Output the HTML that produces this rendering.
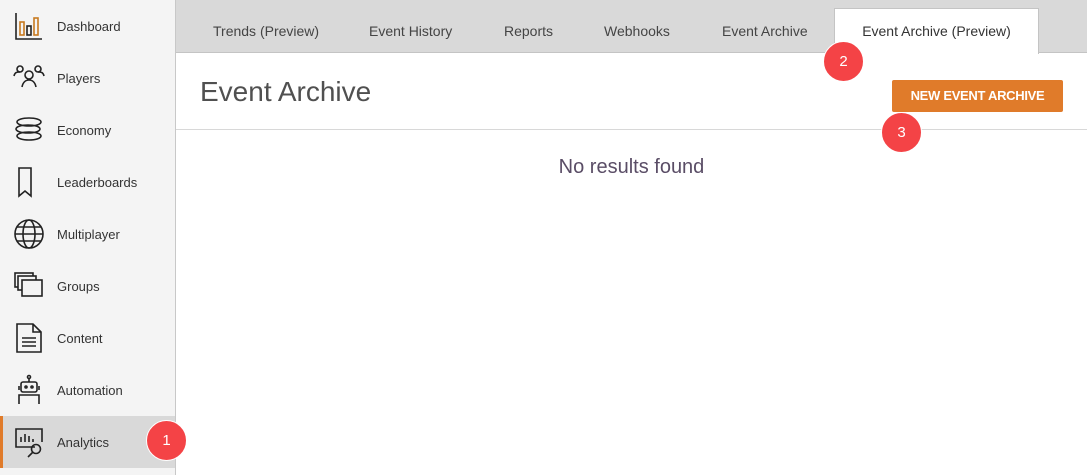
<!DOCTYPE html>
<html><head><style>
*{box-sizing:border-box;margin:0;padding:0}
body{width:1087px;height:475px;overflow:hidden;background:#fff;font-family:"Liberation Sans",sans-serif;position:relative}
.sb{position:absolute;left:0;top:0;width:176px;height:475px;background:#f4f4f4;border-right:1px solid #c8c8c8}
.it{position:absolute;left:0;width:175px;height:52px;display:flex;align-items:center}
.it svg{position:absolute;left:13px;width:32px;height:32px}
.it span{position:absolute;left:57px;font-size:13px;color:#333}
.act{background:#d9d9d9;border-left:3px solid #e07b2a}
.tabs{position:absolute;left:176px;top:0;right:0;height:53px;background:#d9d9d9;border-bottom:1px solid #c4c4c4}
.tab{position:absolute;top:23px;font-size:14px;color:#444}
.atab{position:absolute;left:834px;top:8px;width:205px;height:46px;background:#fff;border:1px solid #c4c4c4;border-bottom:none;text-align:center;padding-top:14px;font-size:14px;color:#333}
h1{position:absolute;left:200px;top:76px;font-size:28px;font-weight:normal;color:#505050}
.line{position:absolute;left:176px;right:0;top:129px;height:1px;background:#d8d8d8}
.btn{position:absolute;left:892px;top:80px;width:171px;height:32px;background:#e07b2a;border-radius:2px;color:#fff;font-size:13px;font-weight:bold;text-align:center;line-height:32px;letter-spacing:-0.3px}
.nr{position:absolute;left:176px;right:0;top:156px;text-align:center;font-size:20px;color:#5a4d66}
.b{position:absolute;width:41px;height:41px;border-radius:50%;background:#f44346;color:#fff;font-size:15px;text-align:center;line-height:39px;border:1px solid #fff}
</style></head><body>
<div class="sb">
<div class="it" style="top:0"><svg viewBox="0 0 32 32" fill="none" stroke="#222" stroke-width="1.6"><path d="M3 3v26h26"/><rect x="7" y="12" width="4" height="13" stroke="#c77a20"/><rect x="14" y="16" width="4" height="9"/><rect x="21" y="8" width="4" height="17" stroke="#c77a20"/></svg><span>Dashboard</span></div>
<div class="it" style="top:52px"><svg viewBox="0 0 32 32" fill="none" stroke="#222" stroke-width="1.6"><circle cx="7" cy="7" r="3"/><circle cx="25" cy="7" r="3"/><circle cx="16" cy="13" r="4"/><path d="M1 14c1-4 3-4 6-4M31 14c-1-4-3-4-6-4M9 25c1-5 4-7 7-7s6 2 7 7"/></svg><span>Players</span></div>
<div class="it" style="top:104px"><svg viewBox="0 0 32 32" fill="none" stroke="#222" stroke-width="1.6"><ellipse cx="16" cy="8" rx="12" ry="4"/><ellipse cx="15" cy="15" rx="12" ry="4"/><ellipse cx="16" cy="22" rx="12" ry="4"/></svg><span>Economy</span></div>
<div class="it" style="top:156px"><svg viewBox="0 0 32 32" fill="none" stroke="#222" stroke-width="1.6"><path d="M6 2h12v28l-6-5-6 5z"/></svg><span>Leaderboards</span></div>
<div class="it" style="top:208px"><svg viewBox="0 0 32 32" fill="none" stroke="#222" stroke-width="1.6"><circle cx="16" cy="16" r="14"/><ellipse cx="16" cy="16" rx="6" ry="14"/><path d="M2 16h28M4 9h24M4 23h24"/></svg><span>Multiplayer</span></div>
<div class="it" style="top:260px"><svg viewBox="0 0 32 32" fill="none" stroke="#222" stroke-width="1.6"><rect x="2" y="3" width="18" height="14"/><rect x="5" y="6" width="18" height="14" fill="#f4f4f4"/><rect x="9" y="10" width="20" height="16" fill="#f4f4f4"/></svg><span>Groups</span></div>
<div class="it" style="top:312px"><svg viewBox="0 0 32 32" fill="none" stroke="#222" stroke-width="1.6"><path d="M4 2h16l8 8v20H4z M20 2v8h8M9 16h14M9 20h14M9 24h14"/></svg><span>Content</span></div>
<div class="it" style="top:364px"><svg viewBox="0 0 32 32" fill="none" stroke="#222" stroke-width="1.6"><circle cx="16" cy="3" r="1.5"/><path d="M16 4v4"/><rect x="8" y="8" width="16" height="10" rx="2"/><circle cx="13" cy="13" r="1"/><circle cx="19" cy="13" r="1"/><path d="M6 12v4M26 12v4M6 30v-9h20v9"/></svg><span>Automation</span></div>
<div class="it act" style="top:416px"><svg viewBox="0 0 32 32" fill="none" stroke="#222" stroke-width="1.6" style="left:10px"><path d="M22 21H3V3h26v13"/><path d="M8 16v-5M12 16V8M16 16v-6M20 16v-3"/><circle cx="23" cy="23" r="4.5"/><path d="M20 26l-5 5"/></svg><span style="left:54px">Analytics</span></div>
</div>
<div class="tabs"></div>
<div class="tab" style="left:213px">Trends (Preview)</div>
<div class="tab" style="left:369px">Event History</div>
<div class="tab" style="left:504px">Reports</div>
<div class="tab" style="left:604px">Webhooks</div>
<div class="tab" style="left:722px">Event Archive</div>
<div class="atab">Event Archive (Preview)</div>
<h1>Event Archive</h1>
<div class="btn">NEW EVENT ARCHIVE</div>
<div class="line"></div>
<div class="nr">No results found</div>
<div class="b" style="left:146px;top:420px">1</div>
<div class="b" style="left:823px;top:41px">2</div>
<div class="b" style="left:881px;top:112px">3</div>
</body></html>
